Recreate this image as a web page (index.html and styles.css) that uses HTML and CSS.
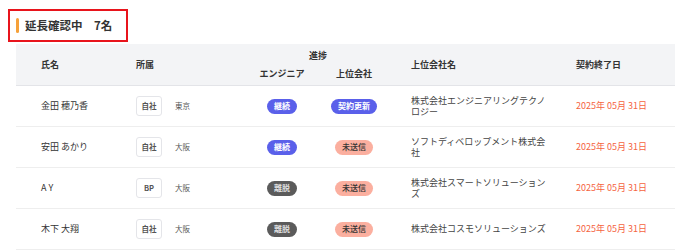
FILE: index.html
```html
<!DOCTYPE html>
<html lang="ja">
<head>
<meta charset="utf-8">
<link rel="stylesheet" href="styles.css">
</head>
<body>
<div class="title-box">
  <span class="title-bar"></span>
  <h2 class="title">延長確認中　7名</h2>
</div>
<div class="table">
  <div class="thead">
    <div class="th th-name">氏名</div>
    <div class="th th-affil">所属</div>
    <div class="th th-progress">進捗</div>
    <div class="th th-eng">エンジニア</div>
    <div class="th th-up">上位会社</div>
    <div class="th th-company">上位会社名</div>
    <div class="th th-date">契約終了日</div>
  </div>
  <div class="tr">
    <div class="td name">金田 穂乃香</div>
    <div class="td affil"><span class="tag">自社</span><span class="region">東京</span></div>
    <div class="td center"><span class="pill pill-blue">継続</span></div>
    <div class="td center"><span class="pill pill-blue">契約更新</span></div>
    <div class="td company"><span class="company-text">株式会社エンジニアリングテクノロジー</span></div>
    <div class="td date">2025年 05月 31日</div>
  </div>
  <div class="tr">
    <div class="td name">安田 あかり</div>
    <div class="td affil"><span class="tag">自社</span><span class="region">大阪</span></div>
    <div class="td center"><span class="pill pill-blue">継続</span></div>
    <div class="td center"><span class="pill pill-salmon">未送信</span></div>
    <div class="td company"><span class="company-text">ソフトディベロップメント株式会社</span></div>
    <div class="td date">2025年 05月 31日</div>
  </div>
  <div class="tr">
    <div class="td name">A Y</div>
    <div class="td affil"><span class="tag">BP</span><span class="region">大阪</span></div>
    <div class="td center"><span class="pill pill-gray">離脱</span></div>
    <div class="td center"><span class="pill pill-salmon">未送信</span></div>
    <div class="td company"><span class="company-text">株式会社スマートソリューションズ</span></div>
    <div class="td date">2025年 05月 31日</div>
  </div>
  <div class="tr">
    <div class="td name">木下 大翔</div>
    <div class="td affil"><span class="tag">自社</span><span class="region">大阪</span></div>
    <div class="td center"><span class="pill pill-gray">離脱</span></div>
    <div class="td center"><span class="pill pill-salmon">未送信</span></div>
    <div class="td company"><span class="company-text">株式会社コスモソリューションズ</span></div>
    <div class="td date">2025年 05月 31日</div>
  </div>
</div>
</body>
</html>
```

FILE: styles.css
```css
* { box-sizing: border-box; }

body {
  margin: 0;
  background: #ffffff;
  font-family: "Noto Sans CJK JP", "Noto Sans", sans-serif;
  color: #333333;
}

.title-box {
  margin: 9px 0 0 8px;
  width: 120px;
  height: 33px;
  border: 2px solid #e8141c;
  display: flex;
  align-items: center;
  gap: 6px;
  padding-left: 6px;
}

.title-bar {
  width: 3px;
  height: 15px;
  border-radius: 2px;
  background: #f6a13a;
}

.title {
  margin: 0;
  font-size: 11.5px;
  font-weight: 700;
  line-height: 15px;
  color: #333333;
}

.table {
  margin: 2px 0 0 16px;
  width: 659px;
}

.thead, .tr {
  display: grid;
  grid-template-columns: 120px 110px 72px 72px 186px 99px;
}

.thead {
  background: #f3f4f6;
  border-bottom: 1px solid #e3e4e8;
  grid-template-rows: 12px 12px;
  row-gap: 6px;
  padding: 6px 0 5px;
  font-size: 9px;
  font-weight: 700;
  line-height: 12px;
}

.th-name { grid-column: 1; grid-row: 1 / 3; align-self: center; padding-left: 25px; }
.th-affil { grid-column: 2; grid-row: 1 / 3; align-self: center; }
.th-progress { grid-column: 3 / 5; grid-row: 1; text-align: center; }
.th-eng { grid-column: 3; grid-row: 2; text-align: center; }
.th-up { grid-column: 4; grid-row: 2; text-align: center; }
.th-company { grid-column: 5; grid-row: 1 / 3; align-self: center; padding-left: 21px; }
.th-date { grid-column: 6; grid-row: 1 / 3; align-self: center; }

.tr {
  height: 41px;
  border-bottom: 1px solid #eeeeee;
  align-items: center;
  font-size: 9px;
  line-height: 11.5px;
}

.td { display: flex; align-items: center; }
.name { padding-left: 25px; color: #333333; }
.center { justify-content: center; }

.affil { gap: 13px; }
.tag {
  width: 26px;
  height: 20px;
  border: 1px solid #e4e5e9;
  border-radius: 3px;
  display: flex;
  align-items: center;
  justify-content: center;
  font-size: 7.5px;
  font-weight: 700;
  color: #555555;
  background: #ffffff;
}
.region { font-size: 7.5px; color: #555555; }

.pill {
  height: 15px;
  padding: 0 7px;
  border-radius: 8px;
  display: inline-flex;
  align-items: center;
  font-size: 8px;
  font-weight: 700;
  line-height: 1;
}
.pill-blue { background: #5a60ea; color: #ffffff; }
.pill-gray { background: #5b5b5b; color: #dedede; }
.pill-salmon { background: #fbaf9f; color: #333333; font-weight: 500; }

.company { padding-left: 21px; }
.company-text { display: block; width: 140px; color: #444444; }

.date { color: #f5643f; }
```
